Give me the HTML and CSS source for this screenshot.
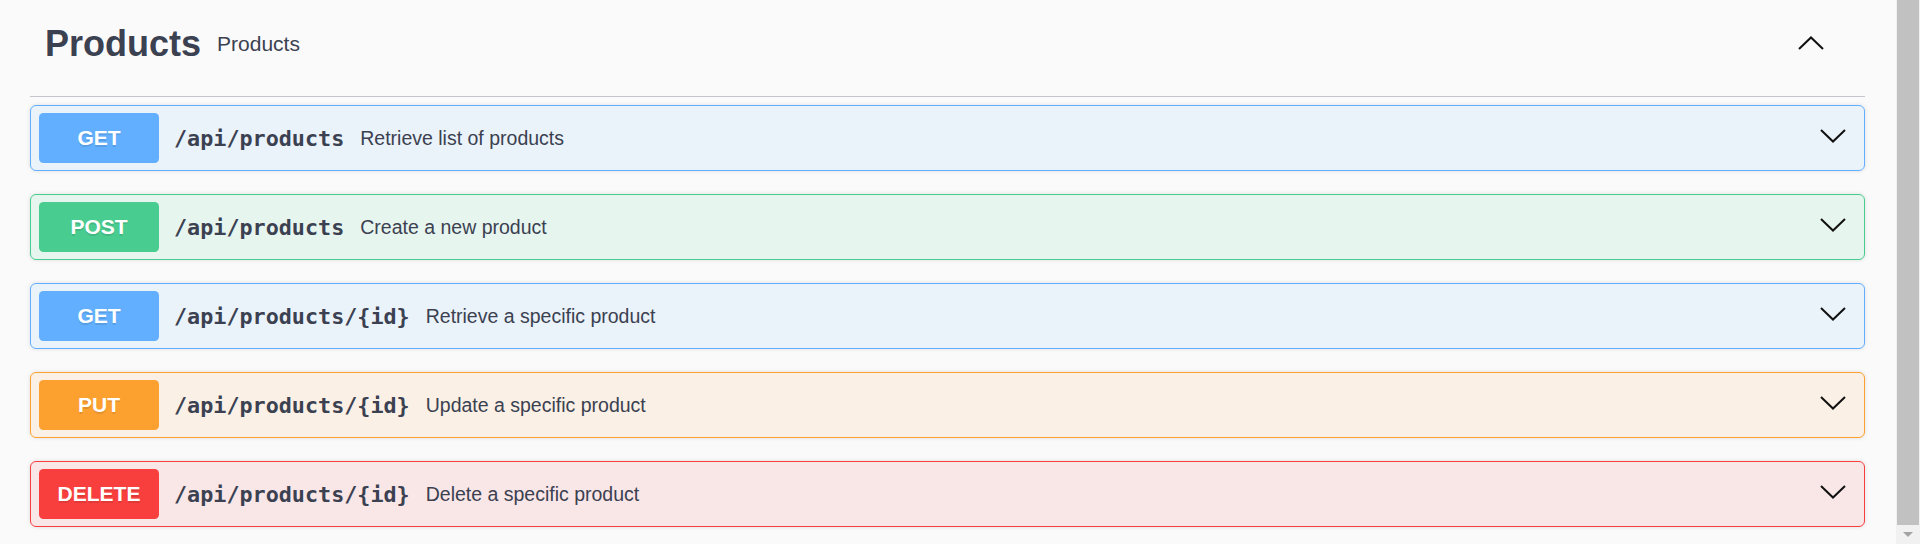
FILE: index.html
```html
<!DOCTYPE html>
<html lang="en">
<head>
<meta charset="utf-8">
<title>Products</title>
<link rel="stylesheet" href="styles.css">
</head>
<body>
<div class="viewport">
  <main class="content">
    <section class="tag-section">
      <div class="tag-header">
        <h3 class="tag-title">Products</h3>
        <span class="tag-desc">Products</span>
        <svg class="chev chev-up" width="26" height="14" viewBox="0 0 26 14"><polyline points="1,13 13,1.5 25,13" fill="none" stroke="#111" stroke-width="2"/></svg>
      </div>

      <div class="opblock op-get">
        <span class="method">GET</span>
        <span class="path">/api/products</span>
        <span class="desc">Retrieve list of products</span>
        <svg class="chev chev-down" width="26" height="14" viewBox="0 0 26 14"><polyline points="1,1 13,12.5 25,1" fill="none" stroke="#111" stroke-width="2"/></svg>
      </div>

      <div class="opblock op-post">
        <span class="method">POST</span>
        <span class="path">/api/products</span>
        <span class="desc">Create a new product</span>
        <svg class="chev chev-down" width="26" height="14" viewBox="0 0 26 14"><polyline points="1,1 13,12.5 25,1" fill="none" stroke="#111" stroke-width="2"/></svg>
      </div>

      <div class="opblock op-get">
        <span class="method">GET</span>
        <span class="path">/api/products/{id}</span>
        <span class="desc">Retrieve a specific product</span>
        <svg class="chev chev-down" width="26" height="14" viewBox="0 0 26 14"><polyline points="1,1 13,12.5 25,1" fill="none" stroke="#111" stroke-width="2"/></svg>
      </div>

      <div class="opblock op-put">
        <span class="method">PUT</span>
        <span class="path">/api/products/{id}</span>
        <span class="desc">Update a specific product</span>
        <svg class="chev chev-down" width="26" height="14" viewBox="0 0 26 14"><polyline points="1,1 13,12.5 25,1" fill="none" stroke="#111" stroke-width="2"/></svg>
      </div>

      <div class="opblock op-delete">
        <span class="method">DELETE</span>
        <span class="path">/api/products/{id}</span>
        <span class="desc">Delete a specific product</span>
        <svg class="chev chev-down" width="26" height="14" viewBox="0 0 26 14"><polyline points="1,1 13,12.5 25,1" fill="none" stroke="#111" stroke-width="2"/></svg>
      </div>
    </section>
  </main>
  <div class="scrollbar">
    <div class="thumb"></div>
    <div class="arrow-area"><span class="arrow-down"></span></div>
  </div>
</div>
</body>
</html>
```

FILE: styles.css
```css
html, body {
  margin: 0;
  padding: 0;
  height: 544px;
  overflow: hidden;
  background: #fafafa;
}

.viewport {
  display: flex;
  height: 544px;
}

.content {
  flex: 1;
  padding: 0 31px 0 30px;
  min-width: 0;
}

.tag-header {
  display: flex;
  align-items: center;
  padding: 23px 0 31px 15px;
  border-bottom: 1px solid #c4c6cb;
  margin-bottom: 8px;
}

.tag-title {
  margin: 0;
  font-family: "Liberation Sans", Arial, sans-serif;
  font-size: 36px;
  font-weight: 700;
  color: #3b4151;
  line-height: normal;
}

.tag-desc {
  flex: 1;
  margin-left: 16px;
  font-family: "Liberation Sans", Arial, sans-serif;
  font-size: 21px;
  color: #3b4151;
}

.chev-up {
  margin-right: 41px;
  margin-bottom: 2px;
  flex: none;
}

.opblock {
  display: flex;
  align-items: center;
  height: 50px;
  padding: 7px 8px;
  border: 1px solid;
  border-radius: 6px;
  margin-bottom: 23px;
  box-shadow: 0 0 4px rgba(0, 0, 0, 0.12);
}

.method {
  flex: none;
  width: 120px;
  height: 50px;
  display: flex;
  align-items: center;
  justify-content: center;
  border-radius: 4.5px;
  color: #fff;
  font-family: "Liberation Sans", Arial, sans-serif;
  font-size: 21px;
  font-weight: 700;
  text-shadow: 0 1.5px 0 rgba(0, 0, 0, 0.1);
}

.path {
  padding: 0 15px;
  font-family: "DejaVu Sans Mono", monospace;
  font-weight: 700;
  font-size: 21.75px;
  color: #3b4151;
}

.desc {
  flex: 1;
  padding-left: 1px;
  font-family: "Liberation Sans", Arial, sans-serif;
  font-size: 19.5px;
  color: #3b4151;
}

.chev-down {
  flex: none;
  margin-right: 10px;
  margin-bottom: 5px;
}

.op-get { background: rgba(97, 175, 254, 0.1); border-color: #61affe; }
.op-get .method { background: #61affe; }

.op-post { background: rgba(73, 204, 144, 0.1); border-color: #49cc90; }
.op-post .method { background: #49cc90; }

.op-put { background: rgba(252, 161, 48, 0.1); border-color: #fca130; }
.op-put .method { background: #fca130; }

.op-delete { background: rgba(249, 62, 62, 0.1); border-color: #f93e3e; }
.op-delete .method { background: #f93e3e; }

.scrollbar {
  flex: none;
  width: 24px;
  display: flex;
  flex-direction: column;
  background: #f1f1f1;
}

.thumb {
  height: 525px;
  margin: 0 1px 0 1px;
  background: #c1c1c1;
}

.arrow-area {
  flex: 1;
  display: flex;
  align-items: center;
  justify-content: center;
}

.arrow-down {
  width: 0;
  height: 0;
  border-left: 5.5px solid transparent;
  border-right: 5.5px solid transparent;
  border-top: 5.5px solid #a3a3a3;
}
```
